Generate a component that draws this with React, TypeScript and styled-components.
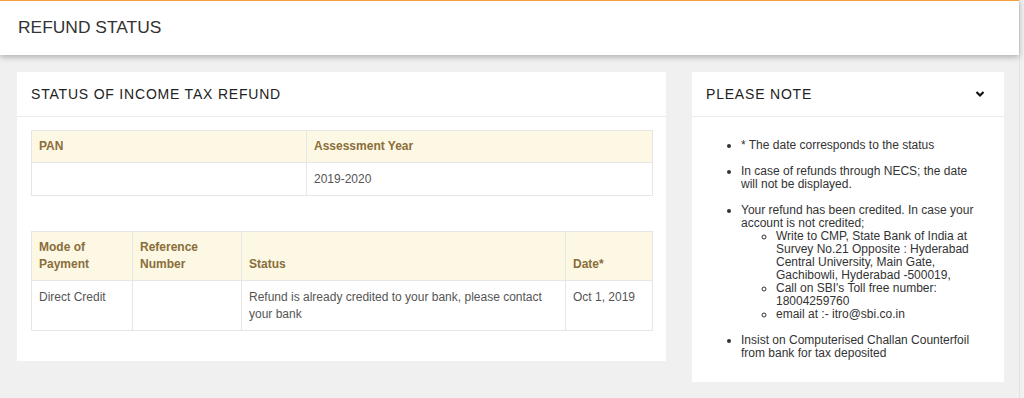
import React from 'react'
import styled, { createGlobalStyle } from 'styled-components'

const GlobalStyle = createGlobalStyle`
  html, body {
    margin: 0;
    padding: 0;
    background: #f0f0f0;
    font-family: "Liberation Sans", Arial, sans-serif;
  }
`

const Page = styled.div`
  width: 1020px;
  min-height: 398px;
  background: #f0f0f0;
  border-right: 1px solid #e2e2e2;
  box-sizing: border-box;
`

const TopBar = styled.header`
  height: 55px;
  box-sizing: border-box;
  background: #fff;
  border-top: 1px solid #f5a03e;
  box-shadow: 0 2px 6px rgba(0, 0, 0, 0.28);
  display: flex;
  align-items: center;
  padding: 0 0 2px 18px;
  position: relative;
  z-index: 1;
`

const PageTitle = styled.h1`
  margin: 0;
  font-size: 17.4px;
  font-weight: normal;
  color: #333;
`

const Main = styled.main`
  display: grid;
  grid-template-columns: 649px 312px;
  gap: 26px;
  align-items: start;
  padding: 17px 16px 0 17px;
`

const Card = styled.section`
  background: #fff;
`

const CardHeader = styled.div`
  height: 44px;
  border-bottom: 1px solid #ececec;
  display: flex;
  align-items: center;
  justify-content: space-between;
  padding: 0 19px 0 14px;
`

const CardTitle = styled.h2`
  margin: 0;
  font-size: 14px;
  font-weight: normal;
  letter-spacing: 0.8px;
  color: #222;
`

const CardBody = styled.div<{ $pad: string }>`
  padding: ${p => p.$pad};
`

const Table = styled.table<{ $gap?: number }>`
  width: 100%;
  table-layout: fixed;
  border-collapse: collapse;
  margin-bottom: ${p => p.$gap ?? 0}px;
  font-size: 12px;
  line-height: 17px;
`

const Th = styled.th<{ $w?: number }>`
  box-sizing: border-box;
  background: #fcf8e3;
  color: #8a6d3b;
  text-align: left;
  vertical-align: bottom;
  font-weight: bold;
  padding: 7px 7px 7px;
  border: 1px solid #e6e6e6;
  width: ${p => (p.$w ? `${p.$w}px` : 'auto')};
`

const Td = styled.td`
  color: #555;
  vertical-align: top;
  padding: 8px 7px 7px;
  border: 1px solid #e6e6e6;
`

const NoteList = styled.ul`
  margin: 0;
  padding-left: 35px;
  font-size: 12px;
  line-height: 13px;
  color: #333;
`

const NoteItem = styled.li`
  margin-bottom: 13px;
  &:last-child {
    margin-bottom: 0;
  }
`

const SubList = styled.ul`
  margin: 0;
  padding-left: 35px;
  list-style-type: circle;
`

const Chevron = () => (
  <svg width="10" height="8" viewBox="0 0 10 8">
    <polyline
      points="1.5,2 5,5.5 8.5,2"
      fill="none"
      stroke="#111"
      strokeWidth="2.2"
    />
  </svg>
)

export default function App() {
  return (
    <>
      <GlobalStyle />
      <Page>
        <TopBar>
          <PageTitle>REFUND STATUS</PageTitle>
        </TopBar>
        <Main>
          <Card>
            <CardHeader>
              <CardTitle>STATUS OF INCOME TAX REFUND</CardTitle>
            </CardHeader>
            <CardBody $pad="13px 13px 30px 14px">
              <Table $gap={35}>
                <thead>
                  <tr>
                    <Th $w={275}>PAN</Th>
                    <Th>Assessment Year</Th>
                  </tr>
                </thead>
                <tbody>
                  <tr>
                    <Td></Td>
                    <Td>2019-2020</Td>
                  </tr>
                </tbody>
              </Table>
              <Table>
                <thead>
                  <tr>
                    <Th $w={101}>Mode of Payment</Th>
                    <Th $w={109}>Reference Number</Th>
                    <Th>Status</Th>
                    <Th $w={87}>Date*</Th>
                  </tr>
                </thead>
                <tbody>
                  <tr>
                    <Td>Direct Credit</Td>
                    <Td></Td>
                    <Td>Refund is already credited to your bank, please contact your bank</Td>
                    <Td>Oct 1, 2019</Td>
                  </tr>
                </tbody>
              </Table>
            </CardBody>
          </Card>
          <Card>
            <CardHeader>
              <CardTitle>PLEASE NOTE</CardTitle>
              <Chevron />
            </CardHeader>
            <CardBody $pad="22px 24px 22px 14px">
              <NoteList>
                <NoteItem>* The date corresponds to the status</NoteItem>
                <NoteItem>In case of refunds through NECS; the date will not be displayed.</NoteItem>
                <NoteItem>
                  Your refund has been credited. In case your account is not credited;
                  <SubList>
                    <li>Write to CMP, State Bank of India at Survey No.21 Opposite : Hyderabad Central University, Main Gate, Gachibowli, Hyderabad -500019,</li>
                    <li>Call on SBI's Toll free number: 18004259760</li>
                    <li>email at :- itro@sbi.co.in</li>
                  </SubList>
                </NoteItem>
                <NoteItem>Insist on Computerised Challan Counterfoil from bank for tax deposited</NoteItem>
              </NoteList>
            </CardBody>
          </Card>
        </Main>
      </Page>
    </>
  )
}
